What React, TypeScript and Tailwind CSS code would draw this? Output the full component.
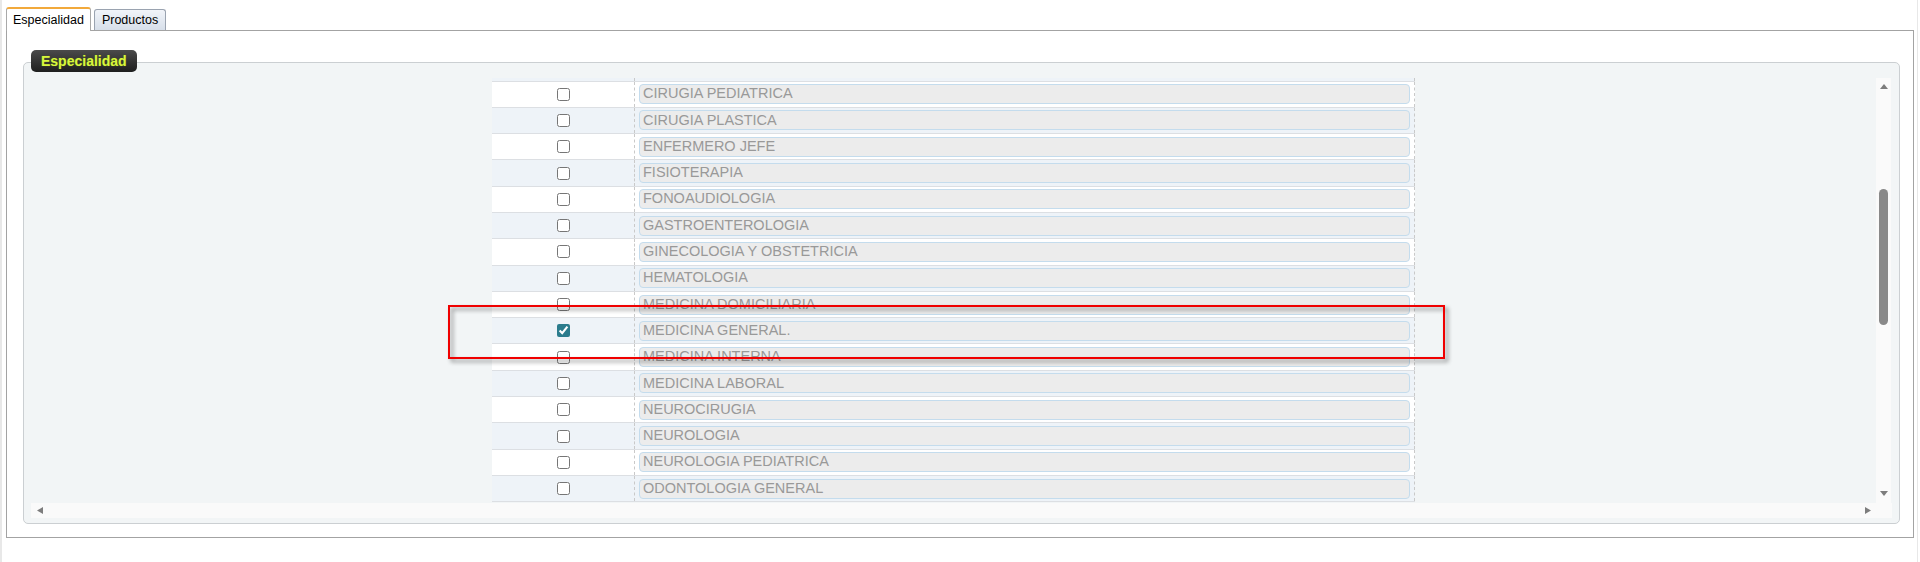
import React from 'react';

const especialidades = [
  '',
  'CIRUGIA PEDIATRICA',
  'CIRUGIA PLASTICA',
  'ENFERMERO JEFE',
  'FISIOTERAPIA',
  'FONOAUDIOLOGIA',
  'GASTROENTEROLOGIA',
  'GINECOLOGIA Y OBSTETRICIA',
  'HEMATOLOGIA',
  'MEDICINA DOMICILIARIA',
  'MEDICINA GENERAL.',
  'MEDICINA INTERNA',
  'MEDICINA LABORAL',
  'NEUROCIRUGIA',
  'NEUROLOGIA',
  'NEUROLOGIA PEDIATRICA',
  'ODONTOLOGIA GENERAL',
];

const Arrow: React.FC<{ dir: 'up' | 'down' | 'left' | 'right' }> = ({ dir }) => {
  const pts = {
    up: '0,5 4,0 8,5',
    down: '0,0 8,0 4,5',
    left: '6,0 6,7 0,3.5',
    right: '0,0 6,3.5 0,7',
  }[dir];
  const horiz = dir === 'left' || dir === 'right';
  return (
    <svg width={horiz ? 6 : 8} height={horiz ? 7 : 5} viewBox={horiz ? '0 0 6 7' : '0 0 8 5'}>
      <polygon points={pts} fill="#7d7d7d" />
    </svg>
  );
};

export default function App() {
  return (
    <div className="relative h-[562px] w-[1918px] border-l-2 border-r border-[#e8e8e8] bg-white pl-[4px] pt-[7px] font-['Liberation_Sans',Arial,sans-serif]">
      {/* Tabs */}
      <div className="flex items-end gap-[3px]">
        <div className="relative z-10 -mb-px flex h-[24px] items-center rounded-t-[3px] border-x border-t-2 border-x-[#a9a9a9] border-t-[#f2a93b] bg-white px-[6px] text-[12.5px] text-black">
          Especialidad
        </div>
        <div className="flex h-[21px] items-center rounded-t-[3px] border border-b-0 border-[#9aa3b0] bg-gradient-to-b from-[#f1f4f9] to-[#d7dfea] px-[7px] text-[12.5px] text-black">
          Productos
        </div>
      </div>

      {/* Panel */}
      <div className="h-[508px] w-[1908px] border border-[#a3a3a3] bg-white pb-[13px] pl-[16px] pr-[13px] pt-[31px]">
        {/* Fieldset */}
        <div className="relative h-[462px] w-[1877px] rounded-[5px] border border-[#cbcfd2] bg-[#f2f5f6] px-[7px] pb-[4px] pt-[15px]">
          <div className="absolute left-[7px] top-[-13px] flex h-[22px] items-center rounded-[5px] bg-gradient-to-b from-[#4b4b4b] to-[#1f1f1f] px-[10px] text-[14px] font-bold text-[#d7f73e] [text-shadow:0_0_1px_#6b7a10]">
            Especialidad
          </div>

          <div className="flex h-[440px] flex-col">
            <div className="flex h-[425px]">
              {/* Viewport */}
              <div className="flex h-[425px] w-[1845px] justify-center overflow-hidden">
                <div className="mt-[-22.8px] w-[923px]">
                  {especialidades.map((name, i) => (
                    <div
                      key={i}
                      className={`flex h-[26.3px] border-b border-[#dcdfe3] ${i % 2 === 0 ? 'bg-[#eef3f8]' : 'bg-white'}`}
                    >
                      <div className="flex w-[143px] items-center justify-center border-r border-dashed border-[#c9c9c9]">
                        <input
                          type="checkbox"
                          defaultChecked={name === 'MEDICINA GENERAL.'}
                          className="m-0 h-[13px] w-[13px] accent-[#2b7c8d]"
                        />
                      </div>
                      <div className="flex w-[780px] items-center border-r border-dashed border-[#c9c9c9] px-[4px]">
                        <div className="flex h-[20px] w-full items-center overflow-hidden whitespace-nowrap rounded-[4px] border border-[#c4dced] bg-[#ececec] pl-[3px] text-[14.5px] text-[#999999]">
                          {name}
                        </div>
                      </div>
                    </div>
                  ))}
                </div>
              </div>

              {/* Vertical scrollbar */}
              <div className="flex w-[15px] flex-col items-center bg-[#fafafa] pb-[7px] pt-[6px]">
                <Arrow dir="up" />
                <div className="mt-[100px] h-[136px] w-[9px] rounded-full bg-[#898989]" />
                <div className="mt-auto">
                  <Arrow dir="down" />
                </div>
              </div>
            </div>

            {/* Horizontal scrollbar */}
            <div className="flex h-[15px] items-center bg-[#fafafa] pl-[6px] pr-[21px]">
              <Arrow dir="left" />
              <div className="flex-1" />
              <Arrow dir="right" />
            </div>
          </div>
        </div>
      </div>

      {/* Annotation highlight */}
      <div className="absolute left-[446px] top-[305px] h-[54px] w-[997px] border-2 border-[#f00000] drop-shadow-[3px_3px_2px_rgba(0,0,0,0.45)]" />
    </div>
  );
}
